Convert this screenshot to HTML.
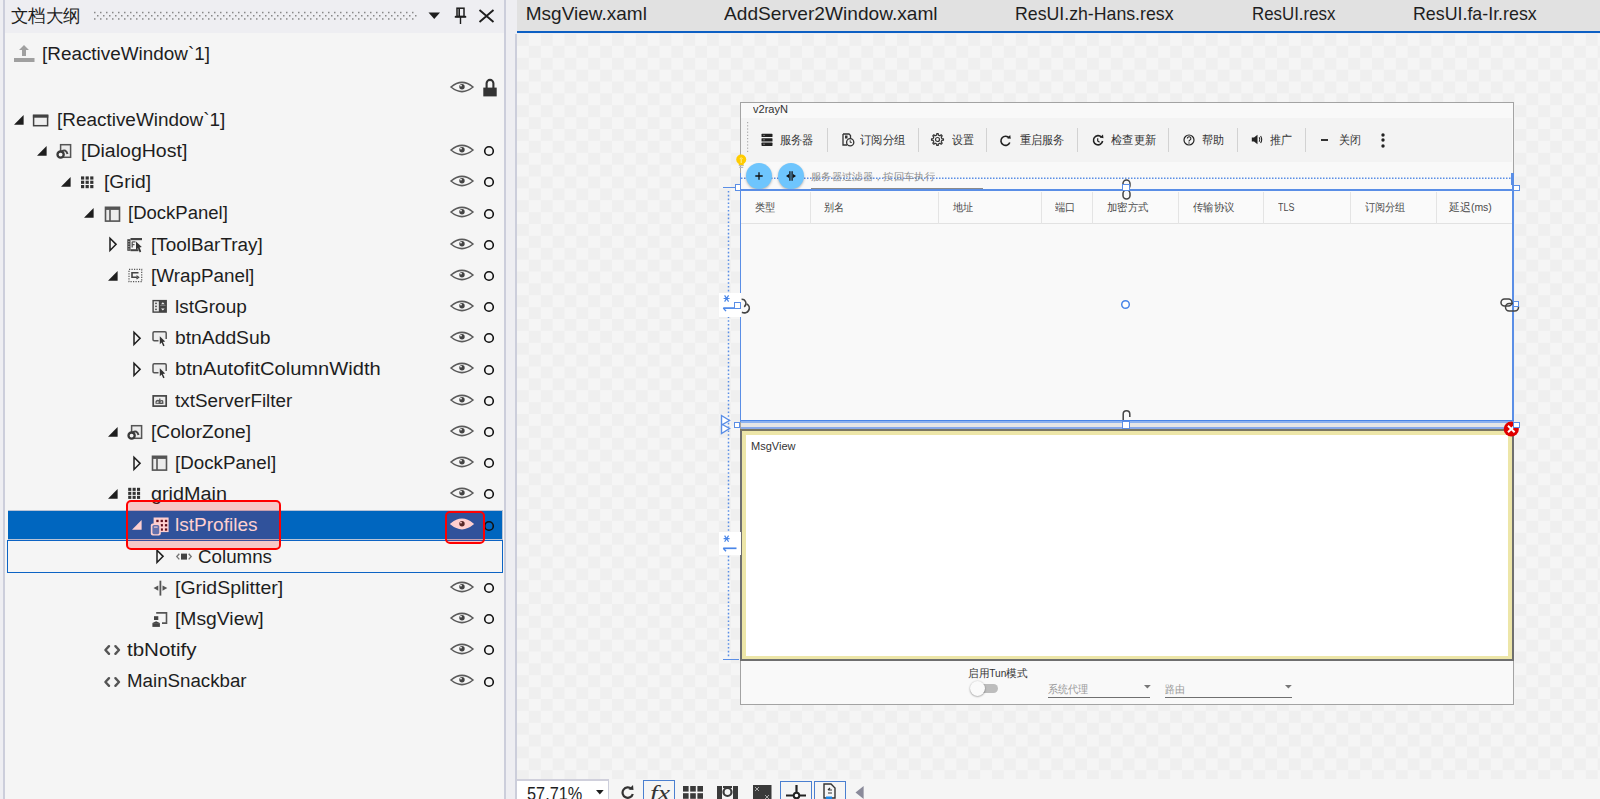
<!DOCTYPE html><html><head><meta charset="utf-8"><style>html,body{margin:0;padding:0}body{width:1600px;height:799px;overflow:hidden;position:relative;background:#eeeef2;font-family:"Liberation Sans",sans-serif}.t{position:absolute;white-space:nowrap;transform-origin:0 0;line-height:1}svg{overflow:visible}</style></head><body><div style="position:absolute;left:0px;top:0px;width:505px;height:799px;background:#f5f5f5;"></div><div style="position:absolute;left:0px;top:0px;width:505px;height:32.5px;background:#eeeef2;"></div><div style="position:absolute;left:0px;top:0px;width:3px;height:799px;background:#eeeef2;"></div><div style="position:absolute;left:3px;top:0px;width:2px;height:799px;background:#cccedb;"></div><div style="position:absolute;left:504px;top:0px;width:2px;height:799px;background:#cccedb;"></div><div style="position:absolute;left:506px;top:0px;width:11px;height:799px;background:#eeeef2;"></div><div style="position:absolute;left:515px;top:34px;width:2px;height:765px;background:#cccedb;"></div><div class="t" id="t0" style="left:11.00px;top:7.26px;font-size:18px;color:#1e1e1e;transform:scaleX(0.9722);">文档大纲</div><svg style="position:absolute;left:0px;top:0px;" width="505" height="32" viewBox="0 0 505 32"><g fill="#888"><rect x="94.0" y="11.8" width="1.5" height="1.5"/><rect x="94.0" y="18.2" width="1.5" height="1.5"/><rect x="97.0" y="15.0" width="1.5" height="1.5"/><rect x="100.0" y="11.8" width="1.5" height="1.5"/><rect x="100.0" y="18.2" width="1.5" height="1.5"/><rect x="103.0" y="15.0" width="1.5" height="1.5"/><rect x="106.0" y="11.8" width="1.5" height="1.5"/><rect x="106.0" y="18.2" width="1.5" height="1.5"/><rect x="109.0" y="15.0" width="1.5" height="1.5"/><rect x="112.0" y="11.8" width="1.5" height="1.5"/><rect x="112.0" y="18.2" width="1.5" height="1.5"/><rect x="115.0" y="15.0" width="1.5" height="1.5"/><rect x="118.0" y="11.8" width="1.5" height="1.5"/><rect x="118.0" y="18.2" width="1.5" height="1.5"/><rect x="121.0" y="15.0" width="1.5" height="1.5"/><rect x="124.0" y="11.8" width="1.5" height="1.5"/><rect x="124.0" y="18.2" width="1.5" height="1.5"/><rect x="127.0" y="15.0" width="1.5" height="1.5"/><rect x="130.0" y="11.8" width="1.5" height="1.5"/><rect x="130.0" y="18.2" width="1.5" height="1.5"/><rect x="133.0" y="15.0" width="1.5" height="1.5"/><rect x="136.0" y="11.8" width="1.5" height="1.5"/><rect x="136.0" y="18.2" width="1.5" height="1.5"/><rect x="139.0" y="15.0" width="1.5" height="1.5"/><rect x="142.0" y="11.8" width="1.5" height="1.5"/><rect x="142.0" y="18.2" width="1.5" height="1.5"/><rect x="145.0" y="15.0" width="1.5" height="1.5"/><rect x="148.0" y="11.8" width="1.5" height="1.5"/><rect x="148.0" y="18.2" width="1.5" height="1.5"/><rect x="151.0" y="15.0" width="1.5" height="1.5"/><rect x="154.0" y="11.8" width="1.5" height="1.5"/><rect x="154.0" y="18.2" width="1.5" height="1.5"/><rect x="157.0" y="15.0" width="1.5" height="1.5"/><rect x="160.0" y="11.8" width="1.5" height="1.5"/><rect x="160.0" y="18.2" width="1.5" height="1.5"/><rect x="163.0" y="15.0" width="1.5" height="1.5"/><rect x="166.0" y="11.8" width="1.5" height="1.5"/><rect x="166.0" y="18.2" width="1.5" height="1.5"/><rect x="169.0" y="15.0" width="1.5" height="1.5"/><rect x="172.0" y="11.8" width="1.5" height="1.5"/><rect x="172.0" y="18.2" width="1.5" height="1.5"/><rect x="175.0" y="15.0" width="1.5" height="1.5"/><rect x="178.0" y="11.8" width="1.5" height="1.5"/><rect x="178.0" y="18.2" width="1.5" height="1.5"/><rect x="181.0" y="15.0" width="1.5" height="1.5"/><rect x="184.0" y="11.8" width="1.5" height="1.5"/><rect x="184.0" y="18.2" width="1.5" height="1.5"/><rect x="187.0" y="15.0" width="1.5" height="1.5"/><rect x="190.0" y="11.8" width="1.5" height="1.5"/><rect x="190.0" y="18.2" width="1.5" height="1.5"/><rect x="193.0" y="15.0" width="1.5" height="1.5"/><rect x="196.0" y="11.8" width="1.5" height="1.5"/><rect x="196.0" y="18.2" width="1.5" height="1.5"/><rect x="199.0" y="15.0" width="1.5" height="1.5"/><rect x="202.0" y="11.8" width="1.5" height="1.5"/><rect x="202.0" y="18.2" width="1.5" height="1.5"/><rect x="205.0" y="15.0" width="1.5" height="1.5"/><rect x="208.0" y="11.8" width="1.5" height="1.5"/><rect x="208.0" y="18.2" width="1.5" height="1.5"/><rect x="211.0" y="15.0" width="1.5" height="1.5"/><rect x="214.0" y="11.8" width="1.5" height="1.5"/><rect x="214.0" y="18.2" width="1.5" height="1.5"/><rect x="217.0" y="15.0" width="1.5" height="1.5"/><rect x="220.0" y="11.8" width="1.5" height="1.5"/><rect x="220.0" y="18.2" width="1.5" height="1.5"/><rect x="223.0" y="15.0" width="1.5" height="1.5"/><rect x="226.0" y="11.8" width="1.5" height="1.5"/><rect x="226.0" y="18.2" width="1.5" height="1.5"/><rect x="229.0" y="15.0" width="1.5" height="1.5"/><rect x="232.0" y="11.8" width="1.5" height="1.5"/><rect x="232.0" y="18.2" width="1.5" height="1.5"/><rect x="235.0" y="15.0" width="1.5" height="1.5"/><rect x="238.0" y="11.8" width="1.5" height="1.5"/><rect x="238.0" y="18.2" width="1.5" height="1.5"/><rect x="241.0" y="15.0" width="1.5" height="1.5"/><rect x="244.0" y="11.8" width="1.5" height="1.5"/><rect x="244.0" y="18.2" width="1.5" height="1.5"/><rect x="247.0" y="15.0" width="1.5" height="1.5"/><rect x="250.0" y="11.8" width="1.5" height="1.5"/><rect x="250.0" y="18.2" width="1.5" height="1.5"/><rect x="253.0" y="15.0" width="1.5" height="1.5"/><rect x="256.0" y="11.8" width="1.5" height="1.5"/><rect x="256.0" y="18.2" width="1.5" height="1.5"/><rect x="259.0" y="15.0" width="1.5" height="1.5"/><rect x="262.0" y="11.8" width="1.5" height="1.5"/><rect x="262.0" y="18.2" width="1.5" height="1.5"/><rect x="265.0" y="15.0" width="1.5" height="1.5"/><rect x="268.0" y="11.8" width="1.5" height="1.5"/><rect x="268.0" y="18.2" width="1.5" height="1.5"/><rect x="271.0" y="15.0" width="1.5" height="1.5"/><rect x="274.0" y="11.8" width="1.5" height="1.5"/><rect x="274.0" y="18.2" width="1.5" height="1.5"/><rect x="277.0" y="15.0" width="1.5" height="1.5"/><rect x="280.0" y="11.8" width="1.5" height="1.5"/><rect x="280.0" y="18.2" width="1.5" height="1.5"/><rect x="283.0" y="15.0" width="1.5" height="1.5"/><rect x="286.0" y="11.8" width="1.5" height="1.5"/><rect x="286.0" y="18.2" width="1.5" height="1.5"/><rect x="289.0" y="15.0" width="1.5" height="1.5"/><rect x="292.0" y="11.8" width="1.5" height="1.5"/><rect x="292.0" y="18.2" width="1.5" height="1.5"/><rect x="295.0" y="15.0" width="1.5" height="1.5"/><rect x="298.0" y="11.8" width="1.5" height="1.5"/><rect x="298.0" y="18.2" width="1.5" height="1.5"/><rect x="301.0" y="15.0" width="1.5" height="1.5"/><rect x="304.0" y="11.8" width="1.5" height="1.5"/><rect x="304.0" y="18.2" width="1.5" height="1.5"/><rect x="307.0" y="15.0" width="1.5" height="1.5"/><rect x="310.0" y="11.8" width="1.5" height="1.5"/><rect x="310.0" y="18.2" width="1.5" height="1.5"/><rect x="313.0" y="15.0" width="1.5" height="1.5"/><rect x="316.0" y="11.8" width="1.5" height="1.5"/><rect x="316.0" y="18.2" width="1.5" height="1.5"/><rect x="319.0" y="15.0" width="1.5" height="1.5"/><rect x="322.0" y="11.8" width="1.5" height="1.5"/><rect x="322.0" y="18.2" width="1.5" height="1.5"/><rect x="325.0" y="15.0" width="1.5" height="1.5"/><rect x="328.0" y="11.8" width="1.5" height="1.5"/><rect x="328.0" y="18.2" width="1.5" height="1.5"/><rect x="331.0" y="15.0" width="1.5" height="1.5"/><rect x="334.0" y="11.8" width="1.5" height="1.5"/><rect x="334.0" y="18.2" width="1.5" height="1.5"/><rect x="337.0" y="15.0" width="1.5" height="1.5"/><rect x="340.0" y="11.8" width="1.5" height="1.5"/><rect x="340.0" y="18.2" width="1.5" height="1.5"/><rect x="343.0" y="15.0" width="1.5" height="1.5"/><rect x="346.0" y="11.8" width="1.5" height="1.5"/><rect x="346.0" y="18.2" width="1.5" height="1.5"/><rect x="349.0" y="15.0" width="1.5" height="1.5"/><rect x="352.0" y="11.8" width="1.5" height="1.5"/><rect x="352.0" y="18.2" width="1.5" height="1.5"/><rect x="355.0" y="15.0" width="1.5" height="1.5"/><rect x="358.0" y="11.8" width="1.5" height="1.5"/><rect x="358.0" y="18.2" width="1.5" height="1.5"/><rect x="361.0" y="15.0" width="1.5" height="1.5"/><rect x="364.0" y="11.8" width="1.5" height="1.5"/><rect x="364.0" y="18.2" width="1.5" height="1.5"/><rect x="367.0" y="15.0" width="1.5" height="1.5"/><rect x="370.0" y="11.8" width="1.5" height="1.5"/><rect x="370.0" y="18.2" width="1.5" height="1.5"/><rect x="373.0" y="15.0" width="1.5" height="1.5"/><rect x="376.0" y="11.8" width="1.5" height="1.5"/><rect x="376.0" y="18.2" width="1.5" height="1.5"/><rect x="379.0" y="15.0" width="1.5" height="1.5"/><rect x="382.0" y="11.8" width="1.5" height="1.5"/><rect x="382.0" y="18.2" width="1.5" height="1.5"/><rect x="385.0" y="15.0" width="1.5" height="1.5"/><rect x="388.0" y="11.8" width="1.5" height="1.5"/><rect x="388.0" y="18.2" width="1.5" height="1.5"/><rect x="391.0" y="15.0" width="1.5" height="1.5"/><rect x="394.0" y="11.8" width="1.5" height="1.5"/><rect x="394.0" y="18.2" width="1.5" height="1.5"/><rect x="397.0" y="15.0" width="1.5" height="1.5"/><rect x="400.0" y="11.8" width="1.5" height="1.5"/><rect x="400.0" y="18.2" width="1.5" height="1.5"/><rect x="403.0" y="15.0" width="1.5" height="1.5"/><rect x="406.0" y="11.8" width="1.5" height="1.5"/><rect x="406.0" y="18.2" width="1.5" height="1.5"/><rect x="409.0" y="15.0" width="1.5" height="1.5"/><rect x="412.0" y="11.8" width="1.5" height="1.5"/><rect x="412.0" y="18.2" width="1.5" height="1.5"/><rect x="415.0" y="15.0" width="1.5" height="1.5"/></g></svg><svg style="position:absolute;left:428px;top:12px;" width="14" height="8" viewBox="0 0 14 8"><path d="M0.5 0.5 L12 0.5 L6.25 7 Z" fill="#1e1e1e"/></svg><svg style="position:absolute;left:454px;top:7px;" width="13" height="18" viewBox="0 0 13 18"><rect x="3" y="1.2" width="7" height="8.3" fill="none" stroke="#1e1e1e" stroke-width="1.5"/><rect x="4.4" y="1.5" width="1.6" height="8" fill="#1e1e1e"/><path d="M0.8 9.8 H12.2" stroke="#1e1e1e" stroke-width="1.9"/><path d="M6.5 10 V17" stroke="#1e1e1e" stroke-width="1.4"/></svg><svg style="position:absolute;left:478px;top:9px;" width="17" height="14" viewBox="0 0 17 14"><path d="M1.5 1 L15.5 13 M15.5 1 L1.5 13" stroke="#1e1e1e" stroke-width="1.9"/></svg><svg style="position:absolute;left:13px;top:44px;" width="23" height="19" viewBox="0 0 23 19"><path d="M11 1 L16 6 H13 V12 H9 V6 H6 Z" fill="#a0a0a0"/><rect x="1" y="14" width="20.5" height="4" fill="#a0a0a0"/></svg><div class="t" id="t1" style="left:42.00px;top:44.96px;font-size:18px;color:#1e1e1e;transform:scaleX(1.0496);">[ReactiveWindow`1]</div><svg style="position:absolute;left:450.4px;top:79.7px;" width="24" height="14" viewBox="0 0 24 14"><path d="M1 7 Q12 -2.2 23 7 Q12 16.2 1 7 Z" fill="none" stroke="#5a5a5a" stroke-width="1.5"/><circle cx="12" cy="6.8" r="2.7" fill="#444"/><circle cx="11" cy="5.6" r="0.9" fill="#f5f5f5"/></svg><svg style="position:absolute;left:482px;top:78px;" width="16" height="19" viewBox="0 0 16 19"><path d="M4.6 10 V5.3 A3.4 3.4 0 0 1 11.4 5.3 V10" fill="none" stroke="#333" stroke-width="2.1"/><rect x="1.3" y="9.6" width="13.4" height="8.8" fill="#333"/></svg><div style="position:absolute;left:7.5px;top:510px;width:495px;height:29.5px;background:#b9c3d6;"></div><div style="position:absolute;left:8px;top:511px;width:494px;height:27.5px;background:#0066bf;"></div><div style="position:absolute;left:7px;top:540px;width:493.5px;height:30.5px;border:1.2px solid #0c63c4;box-sizing:content-box"></div><svg style="position:absolute;left:13.5px;top:114.80000000000001px;" width="10" height="10" viewBox="0 0 10 10"><path d="M9.6 0 L9.6 9.8 L0 9.8 Z" fill="#1e1e1e"/></svg><svg style="position:absolute;left:32.7px;top:111.9px;" width="20" height="18" viewBox="0 0 20 18"><rect x="0.6" y="3.4" width="14" height="10.3" fill="#efefef" stroke="#424242" stroke-width="1.5"/><rect x="-0.1" y="2.7" width="15.4" height="3" fill="#424242"/></svg><div class="t" id="t2" style="left:57.00px;top:110.76px;font-size:18px;color:#1e1e1e;transform:scaleX(1.0515);">[ReactiveWindow`1]</div><svg style="position:absolute;left:37.1px;top:146.0px;" width="10" height="10" viewBox="0 0 10 10"><path d="M9.6 0 L9.6 9.8 L0 9.8 Z" fill="#1e1e1e"/></svg><svg style="position:absolute;left:56.300000000000004px;top:143.1px;" width="20" height="18" viewBox="0 0 20 18"><rect x="4.6" y="1.7" width="10" height="12.6" fill="#ececec" stroke="#555" stroke-width="1.5"/><path d="M5.5 8.5 Q10 5.5 11.5 11" fill="none" stroke="#444" stroke-width="2"/><circle cx="4.6" cy="11.6" r="3.1" fill="#f5f5f5" stroke="#3a3a3a" stroke-width="2.3"/></svg><div class="t" id="t3" style="left:80.60px;top:141.96px;font-size:18px;color:#1e1e1e;transform:scaleX(1.0842);">[DialogHost]</div><svg style="position:absolute;left:450.4px;top:143.0px;" width="24" height="14" viewBox="0 0 24 14"><path d="M1 7 Q12 -2.2 23 7 Q12 16.2 1 7 Z" fill="none" stroke="#5a5a5a" stroke-width="1.5"/><circle cx="12" cy="6.8" r="2.7" fill="#444"/><circle cx="11" cy="5.6" r="0.9" fill="#f5f5f5"/></svg><svg style="position:absolute;left:483px;top:145.2px;" width="12" height="12" viewBox="0 0 12 12"><circle cx="6" cy="6" r="4.3" fill="none" stroke="#111" stroke-width="1.6"/></svg><svg style="position:absolute;left:60.7px;top:177.20000000000002px;" width="10" height="10" viewBox="0 0 10 10"><path d="M9.6 0 L9.6 9.8 L0 9.8 Z" fill="#1e1e1e"/></svg><svg style="position:absolute;left:79.9px;top:174.3px;" width="20" height="18" viewBox="0 0 20 18"><rect x="1.0" y="2.4" width="3.2" height="3.2" fill="#333"/><rect x="5.6" y="2.4" width="3.2" height="3.2" fill="#333"/><rect x="10.2" y="2.4" width="3.2" height="3.2" fill="#333"/><rect x="1.0" y="6.7" width="3.2" height="3.2" fill="#333"/><rect x="5.6" y="6.7" width="3.2" height="3.2" fill="#333"/><rect x="10.2" y="6.7" width="3.2" height="3.2" fill="#333"/><rect x="1.0" y="11.0" width="3.2" height="3.2" fill="#333"/><rect x="5.6" y="11.0" width="3.2" height="3.2" fill="#333"/><rect x="10.2" y="11.0" width="3.2" height="3.2" fill="#333"/></svg><div class="t" id="t4" style="left:104.20px;top:173.16px;font-size:18px;color:#1e1e1e;transform:scaleX(1.0678);">[Grid]</div><svg style="position:absolute;left:450.4px;top:174.20000000000002px;" width="24" height="14" viewBox="0 0 24 14"><path d="M1 7 Q12 -2.2 23 7 Q12 16.2 1 7 Z" fill="none" stroke="#5a5a5a" stroke-width="1.5"/><circle cx="12" cy="6.8" r="2.7" fill="#444"/><circle cx="11" cy="5.6" r="0.9" fill="#f5f5f5"/></svg><svg style="position:absolute;left:483px;top:176.4px;" width="12" height="12" viewBox="0 0 12 12"><circle cx="6" cy="6" r="4.3" fill="none" stroke="#111" stroke-width="1.6"/></svg><svg style="position:absolute;left:84.30000000000001px;top:208.4px;" width="10" height="10" viewBox="0 0 10 10"><path d="M9.6 0 L9.6 9.8 L0 9.8 Z" fill="#1e1e1e"/></svg><svg style="position:absolute;left:103.50000000000001px;top:205.5px;" width="20" height="18" viewBox="0 0 20 18"><rect x="1.5" y="1.3" width="14" height="13.8" fill="#ececec" stroke="#555" stroke-width="1.6"/><rect x="1.5" y="1.3" width="14" height="2.6" fill="#555"/><path d="M6 3.5 V15" stroke="#555" stroke-width="1.6"/></svg><div class="t" id="t5" style="left:127.80px;top:204.36px;font-size:18px;color:#1e1e1e;transform:scaleX(1.0282);">[DockPanel]</div><svg style="position:absolute;left:450.4px;top:205.4px;" width="24" height="14" viewBox="0 0 24 14"><path d="M1 7 Q12 -2.2 23 7 Q12 16.2 1 7 Z" fill="none" stroke="#5a5a5a" stroke-width="1.5"/><circle cx="12" cy="6.8" r="2.7" fill="#444"/><circle cx="11" cy="5.6" r="0.9" fill="#f5f5f5"/></svg><svg style="position:absolute;left:483px;top:207.6px;" width="12" height="12" viewBox="0 0 12 12"><circle cx="6" cy="6" r="4.3" fill="none" stroke="#111" stroke-width="1.6"/></svg><svg style="position:absolute;left:109.0px;top:237.2px;" width="9" height="15" viewBox="0 0 9 15"><path d="M1 1.2 L7.1 7.35 L1 13.5 Z" fill="none" stroke="#1e1e1e" stroke-width="1.5" stroke-linejoin="miter"/></svg><svg style="position:absolute;left:127.10000000000001px;top:236.7px;" width="20" height="18" viewBox="0 0 20 18"><rect x="3.5" y="1" width="11.5" height="2.2" fill="#444"/><rect x="0.3" y="2.2" width="3.2" height="11.6" fill="#444"/><path d="M1.2 4.5 H2.6 M1.2 7 H2.6 M1.2 9.5 H2.6 M1.2 12 H2.6" stroke="#bbb" stroke-width="0.9"/><rect x="3.5" y="12.2" width="8" height="2" fill="#444"/><path d="M5.2 4.8 V10.5 M5.2 4.8 H8.5 M5.2 7.7 H7.5" stroke="#555" stroke-width="1.3" fill="none"/><path d="M9 4.5 L14.8 10 L12.6 10.4 L14.2 14.6 L12.7 15.4 L11 11.3 L9 13 Z" fill="#333"/></svg><div class="t" id="t6" style="left:151.40px;top:235.56px;font-size:18px;color:#1e1e1e;transform:scaleX(1.0510);">[ToolBarTray]</div><svg style="position:absolute;left:450.4px;top:236.6px;" width="24" height="14" viewBox="0 0 24 14"><path d="M1 7 Q12 -2.2 23 7 Q12 16.2 1 7 Z" fill="none" stroke="#5a5a5a" stroke-width="1.5"/><circle cx="12" cy="6.8" r="2.7" fill="#444"/><circle cx="11" cy="5.6" r="0.9" fill="#f5f5f5"/></svg><svg style="position:absolute;left:483px;top:238.79999999999998px;" width="12" height="12" viewBox="0 0 12 12"><circle cx="6" cy="6" r="4.3" fill="none" stroke="#111" stroke-width="1.6"/></svg><svg style="position:absolute;left:107.9px;top:270.79999999999995px;" width="10" height="10" viewBox="0 0 10 10"><path d="M9.6 0 L9.6 9.8 L0 9.8 Z" fill="#1e1e1e"/></svg><svg style="position:absolute;left:127.10000000000001px;top:267.9px;" width="20" height="18" viewBox="0 0 20 18"><rect x="2" y="1.4" width="12.7" height="12.3" fill="none" stroke="#555" stroke-width="1.2" stroke-dasharray="1.2 1.3"/><path d="M11.5 4.8 H5 V9.3 H10.5" stroke="#444" stroke-width="1.6" fill="none"/><path d="M9.5 7.6 L11.8 9.3 L9.5 11" fill="none" stroke="#444" stroke-width="1.1"/></svg><div class="t" id="t7" style="left:151.40px;top:266.76px;font-size:18px;color:#1e1e1e;transform:scaleX(1.0464);">[WrapPanel]</div><svg style="position:absolute;left:450.4px;top:267.79999999999995px;" width="24" height="14" viewBox="0 0 24 14"><path d="M1 7 Q12 -2.2 23 7 Q12 16.2 1 7 Z" fill="none" stroke="#5a5a5a" stroke-width="1.5"/><circle cx="12" cy="6.8" r="2.7" fill="#444"/><circle cx="11" cy="5.6" r="0.9" fill="#f5f5f5"/></svg><svg style="position:absolute;left:483px;top:270.0px;" width="12" height="12" viewBox="0 0 12 12"><circle cx="6" cy="6" r="4.3" fill="none" stroke="#111" stroke-width="1.6"/></svg><svg style="position:absolute;left:150.7px;top:299.1px;" width="20" height="18" viewBox="0 0 20 18"><rect x="2.1" y="1.6" width="13.1" height="11.5" fill="#e8e8e8" stroke="#444" stroke-width="1.4"/><path d="M8.5 1.6 V13.1 M8.5 7.3 H15.2" stroke="#444" stroke-width="1.3"/><rect x="8.5" y="1.6" width="6.7" height="5" fill="#444"/><rect x="8.5" y="8" width="6.7" height="5" fill="#444"/><path d="M10 5.3 L11.85 3.2 L13.7 5.3 Z M10 9.5 L11.85 11.6 L13.7 9.5 Z" fill="#eee"/><circle cx="5" cy="4.3" r="0.9" fill="#444"/><circle cx="5" cy="7.3" r="0.9" fill="#444"/><circle cx="5" cy="10.3" r="0.9" fill="#444"/></svg><div class="t" id="t8" style="left:175.00px;top:297.96px;font-size:18px;color:#1e1e1e;transform:scaleX(1.0554);">lstGroup</div><svg style="position:absolute;left:450.4px;top:299.0px;" width="24" height="14" viewBox="0 0 24 14"><path d="M1 7 Q12 -2.2 23 7 Q12 16.2 1 7 Z" fill="none" stroke="#5a5a5a" stroke-width="1.5"/><circle cx="12" cy="6.8" r="2.7" fill="#444"/><circle cx="11" cy="5.6" r="0.9" fill="#f5f5f5"/></svg><svg style="position:absolute;left:483px;top:301.20000000000005px;" width="12" height="12" viewBox="0 0 12 12"><circle cx="6" cy="6" r="4.3" fill="none" stroke="#111" stroke-width="1.6"/></svg><svg style="position:absolute;left:132.6px;top:330.8px;" width="9" height="15" viewBox="0 0 9 15"><path d="M1 1.2 L7.1 7.35 L1 13.5 Z" fill="none" stroke="#1e1e1e" stroke-width="1.5" stroke-linejoin="miter"/></svg><svg style="position:absolute;left:150.7px;top:330.3px;" width="20" height="18" viewBox="0 0 20 18"><path d="M7.5 10.8 H3.2 Q2 10.8 2 9.6 V3 Q2 1.8 3.2 1.8 H14 Q15.2 1.8 15.2 3 V9 " fill="#ededed" stroke="#555" stroke-width="1.5"/><path d="M8.8 6.3 L14.2 11.6 L11.9 11.9 L13.6 15.6 L12.2 16.3 L10.6 12.6 L8.8 14.2 Z" fill="#333"/></svg><div class="t" id="t9" style="left:175.00px;top:329.16px;font-size:18px;color:#1e1e1e;transform:scaleX(1.0710);">btnAddSub</div><svg style="position:absolute;left:450.4px;top:330.2px;" width="24" height="14" viewBox="0 0 24 14"><path d="M1 7 Q12 -2.2 23 7 Q12 16.2 1 7 Z" fill="none" stroke="#5a5a5a" stroke-width="1.5"/><circle cx="12" cy="6.8" r="2.7" fill="#444"/><circle cx="11" cy="5.6" r="0.9" fill="#f5f5f5"/></svg><svg style="position:absolute;left:483px;top:332.40000000000003px;" width="12" height="12" viewBox="0 0 12 12"><circle cx="6" cy="6" r="4.3" fill="none" stroke="#111" stroke-width="1.6"/></svg><svg style="position:absolute;left:132.6px;top:362.0px;" width="9" height="15" viewBox="0 0 9 15"><path d="M1 1.2 L7.1 7.35 L1 13.5 Z" fill="none" stroke="#1e1e1e" stroke-width="1.5" stroke-linejoin="miter"/></svg><svg style="position:absolute;left:150.7px;top:361.5px;" width="20" height="18" viewBox="0 0 20 18"><path d="M7.5 10.8 H3.2 Q2 10.8 2 9.6 V3 Q2 1.8 3.2 1.8 H14 Q15.2 1.8 15.2 3 V9 " fill="#ededed" stroke="#555" stroke-width="1.5"/><path d="M8.8 6.3 L14.2 11.6 L11.9 11.9 L13.6 15.6 L12.2 16.3 L10.6 12.6 L8.8 14.2 Z" fill="#333"/></svg><div class="t" id="t10" style="left:175.00px;top:360.36px;font-size:18px;color:#1e1e1e;transform:scaleX(1.1174);">btnAutofitColumnWidth</div><svg style="position:absolute;left:450.4px;top:361.4px;" width="24" height="14" viewBox="0 0 24 14"><path d="M1 7 Q12 -2.2 23 7 Q12 16.2 1 7 Z" fill="none" stroke="#5a5a5a" stroke-width="1.5"/><circle cx="12" cy="6.8" r="2.7" fill="#444"/><circle cx="11" cy="5.6" r="0.9" fill="#f5f5f5"/></svg><svg style="position:absolute;left:483px;top:363.6px;" width="12" height="12" viewBox="0 0 12 12"><circle cx="6" cy="6" r="4.3" fill="none" stroke="#111" stroke-width="1.6"/></svg><svg style="position:absolute;left:150.7px;top:392.70000000000005px;" width="20" height="18" viewBox="0 0 20 18"><rect x="2.2" y="2.9" width="13" height="10.2" fill="#ededed" stroke="#444" stroke-width="1.7"/><path d="M5 9.8 Q5 7.5 7 7.5 Q8.2 7.5 8.2 8.6 V10.5 M8.8 5.5 V10.5 M8.8 8.5 Q11.8 6.5 11.8 9 Q11.8 10.8 8.8 10.3" fill="none" stroke="#555" stroke-width="1.3"/><path d="M4.5 10.3 H12.5" stroke="#555" stroke-width="1"/></svg><div class="t" id="t11" style="left:175.00px;top:391.56px;font-size:18px;color:#1e1e1e;transform:scaleX(1.0470);">txtServerFilter</div><svg style="position:absolute;left:450.4px;top:392.6px;" width="24" height="14" viewBox="0 0 24 14"><path d="M1 7 Q12 -2.2 23 7 Q12 16.2 1 7 Z" fill="none" stroke="#5a5a5a" stroke-width="1.5"/><circle cx="12" cy="6.8" r="2.7" fill="#444"/><circle cx="11" cy="5.6" r="0.9" fill="#f5f5f5"/></svg><svg style="position:absolute;left:483px;top:394.80000000000007px;" width="12" height="12" viewBox="0 0 12 12"><circle cx="6" cy="6" r="4.3" fill="none" stroke="#111" stroke-width="1.6"/></svg><svg style="position:absolute;left:107.9px;top:426.79999999999995px;" width="10" height="10" viewBox="0 0 10 10"><path d="M9.6 0 L9.6 9.8 L0 9.8 Z" fill="#1e1e1e"/></svg><svg style="position:absolute;left:127.10000000000001px;top:423.9px;" width="20" height="18" viewBox="0 0 20 18"><rect x="4.6" y="1.7" width="10" height="12.6" fill="#ececec" stroke="#555" stroke-width="1.5"/><path d="M5.5 8.5 Q10 5.5 11.5 11" fill="none" stroke="#444" stroke-width="2"/><circle cx="4.6" cy="11.6" r="3.1" fill="#f5f5f5" stroke="#3a3a3a" stroke-width="2.3"/></svg><div class="t" id="t12" style="left:151.40px;top:422.76px;font-size:18px;color:#1e1e1e;transform:scaleX(1.0633);">[ColorZone]</div><svg style="position:absolute;left:450.4px;top:423.79999999999995px;" width="24" height="14" viewBox="0 0 24 14"><path d="M1 7 Q12 -2.2 23 7 Q12 16.2 1 7 Z" fill="none" stroke="#5a5a5a" stroke-width="1.5"/><circle cx="12" cy="6.8" r="2.7" fill="#444"/><circle cx="11" cy="5.6" r="0.9" fill="#f5f5f5"/></svg><svg style="position:absolute;left:483px;top:426.0px;" width="12" height="12" viewBox="0 0 12 12"><circle cx="6" cy="6" r="4.3" fill="none" stroke="#111" stroke-width="1.6"/></svg><svg style="position:absolute;left:132.6px;top:455.6px;" width="9" height="15" viewBox="0 0 9 15"><path d="M1 1.2 L7.1 7.35 L1 13.5 Z" fill="none" stroke="#1e1e1e" stroke-width="1.5" stroke-linejoin="miter"/></svg><svg style="position:absolute;left:150.7px;top:455.1px;" width="20" height="18" viewBox="0 0 20 18"><rect x="1.5" y="1.3" width="14" height="13.8" fill="#ececec" stroke="#555" stroke-width="1.6"/><rect x="1.5" y="1.3" width="14" height="2.6" fill="#555"/><path d="M6 3.5 V15" stroke="#555" stroke-width="1.6"/></svg><div class="t" id="t13" style="left:175.00px;top:453.96px;font-size:18px;color:#1e1e1e;transform:scaleX(1.0416);">[DockPanel]</div><svg style="position:absolute;left:450.4px;top:455.0px;" width="24" height="14" viewBox="0 0 24 14"><path d="M1 7 Q12 -2.2 23 7 Q12 16.2 1 7 Z" fill="none" stroke="#5a5a5a" stroke-width="1.5"/><circle cx="12" cy="6.8" r="2.7" fill="#444"/><circle cx="11" cy="5.6" r="0.9" fill="#f5f5f5"/></svg><svg style="position:absolute;left:483px;top:457.20000000000005px;" width="12" height="12" viewBox="0 0 12 12"><circle cx="6" cy="6" r="4.3" fill="none" stroke="#111" stroke-width="1.6"/></svg><svg style="position:absolute;left:107.9px;top:489.19999999999993px;" width="10" height="10" viewBox="0 0 10 10"><path d="M9.6 0 L9.6 9.8 L0 9.8 Z" fill="#1e1e1e"/></svg><svg style="position:absolute;left:127.10000000000001px;top:486.29999999999995px;" width="20" height="18" viewBox="0 0 20 18"><rect x="1.2" y="1.8" width="3.1" height="3.1" fill="#333"/><rect x="5.6" y="1.8" width="3.1" height="3.1" fill="#333"/><rect x="10.0" y="1.8" width="3.1" height="3.1" fill="#333"/><rect x="1.2" y="5.8" width="3.1" height="3.1" fill="#333"/><rect x="5.6" y="5.8" width="3.1" height="3.1" fill="#333"/><rect x="10.0" y="5.8" width="3.1" height="3.1" fill="#333"/><rect x="1.2" y="9.8" width="3.1" height="3.1" fill="#333"/><rect x="5.6" y="9.8" width="3.1" height="3.1" fill="#333"/><rect x="10.0" y="9.8" width="3.1" height="3.1" fill="#333"/></svg><div class="t" id="t14" style="left:151.40px;top:485.16px;font-size:18px;color:#1e1e1e;transform:scaleX(1.1010);">gridMain</div><svg style="position:absolute;left:450.4px;top:486.19999999999993px;" width="24" height="14" viewBox="0 0 24 14"><path d="M1 7 Q12 -2.2 23 7 Q12 16.2 1 7 Z" fill="none" stroke="#5a5a5a" stroke-width="1.5"/><circle cx="12" cy="6.8" r="2.7" fill="#444"/><circle cx="11" cy="5.6" r="0.9" fill="#f5f5f5"/></svg><svg style="position:absolute;left:483px;top:488.4px;" width="12" height="12" viewBox="0 0 12 12"><circle cx="6" cy="6" r="4.3" fill="none" stroke="#111" stroke-width="1.6"/></svg><svg style="position:absolute;left:131.5px;top:520.4px;" width="10" height="10" viewBox="0 0 10 10"><path d="M9.6 0 L9.6 9.8 L0 9.8 Z" fill="#ffffff"/></svg><svg style="position:absolute;left:150.7px;top:517.5px;" width="20" height="18" viewBox="0 0 20 18"><rect x="2.6" y="-0.5" width="15" height="14.6" fill="#ffffff"/><rect x="5.3" y="1.8" width="2.3" height="2.3" fill="#3a1020"/><rect x="9.6" y="1.8" width="2.3" height="2.3" fill="#3a1020"/><rect x="13.9" y="1.8" width="2.3" height="2.3" fill="#3a1020"/><rect x="5.3" y="6.1" width="2.3" height="2.3" fill="#3a1020"/><rect x="9.6" y="6.1" width="2.3" height="2.3" fill="#3a1020"/><rect x="13.9" y="6.1" width="2.3" height="2.3" fill="#3a1020"/><rect x="5.3" y="10.4" width="2.3" height="2.3" fill="#3a1020"/><rect x="9.6" y="10.4" width="2.3" height="2.3" fill="#3a1020"/><rect x="13.9" y="10.4" width="2.3" height="2.3" fill="#3a1020"/><rect x="-0.2" y="5.5" width="10" height="12" rx="2" fill="#ffffff"/><rect x="1.4" y="7" width="6.8" height="9.2" rx="1.6" fill="#3f8ad6"/><rect x="2.8" y="8.5" width="4" height="1.2" rx="0.6" fill="#e8f2ff"/></svg><div class="t" id="t15" style="left:175.00px;top:516.36px;font-size:18px;color:#ffffff;transform:scaleX(1.0586);">lstProfiles</div><svg style="position:absolute;left:450.4px;top:517.4px;" width="24" height="14" viewBox="0 0 24 14"><path d="M1 7 Q12 -2.2 23 7 Q12 16.2 1 7 Z" fill="#ffffff" stroke="#ffffff" stroke-width="1.5"/><circle cx="12" cy="6.8" r="2.7" fill="#333"/><circle cx="11" cy="5.6" r="0.9" fill="#ffffff"/></svg><svg style="position:absolute;left:483px;top:519.6px;" width="12" height="12" viewBox="0 0 12 12"><circle cx="6" cy="6" r="4.3" fill="none" stroke="#111" stroke-width="1.6"/></svg><svg style="position:absolute;left:156.2px;top:549.2px;" width="9" height="15" viewBox="0 0 9 15"><path d="M1 1.2 L7.1 7.35 L1 13.5 Z" fill="none" stroke="#1e1e1e" stroke-width="1.5" stroke-linejoin="miter"/></svg><svg style="position:absolute;left:175.5px;top:552.9000000000001px;" width="17" height="9" viewBox="0 0 17 9"><path d="M3.3 0.8 L0.8 3.6 L3.3 6.4" fill="none" stroke="#777" stroke-width="1.4"/><rect x="5" y="0.6" width="6" height="6" fill="#444"/><path d="M12.7 0.8 L15.2 3.6 L12.7 6.4" fill="none" stroke="#777" stroke-width="1.4"/></svg><div class="t" id="t16" style="left:198.00px;top:547.56px;font-size:18px;color:#1e1e1e;transform:scaleX(1.0418);">Columns</div><svg style="position:absolute;left:150.7px;top:579.9px;" width="20" height="18" viewBox="0 0 20 18"><path d="M9.4 0.7 V15.6" stroke="#555" stroke-width="1.8"/><path d="M2.5 8.1 L7.3 5.4 V10.8 Z M16.3 8.1 L11.5 5.4 V10.8 Z" fill="#555"/></svg><div class="t" id="t17" style="left:175.00px;top:578.76px;font-size:18px;color:#1e1e1e;transform:scaleX(1.0807);">[GridSplitter]</div><svg style="position:absolute;left:450.4px;top:579.8px;" width="24" height="14" viewBox="0 0 24 14"><path d="M1 7 Q12 -2.2 23 7 Q12 16.2 1 7 Z" fill="none" stroke="#5a5a5a" stroke-width="1.5"/><circle cx="12" cy="6.8" r="2.7" fill="#444"/><circle cx="11" cy="5.6" r="0.9" fill="#f5f5f5"/></svg><svg style="position:absolute;left:483px;top:582.0px;" width="12" height="12" viewBox="0 0 12 12"><circle cx="6" cy="6" r="4.3" fill="none" stroke="#111" stroke-width="1.6"/></svg><svg style="position:absolute;left:150.7px;top:611.1px;" width="20" height="18" viewBox="0 0 20 18"><path d="M5.2 1.9 H15.5 V12.1 H11" fill="none" stroke="#555" stroke-width="1.6"/><rect x="3" y="5.2" width="4.3" height="3.8" fill="#444"/><rect x="1.4" y="12.1" width="7.5" height="3.8" fill="#444"/><path d="M1.4 12.1 L5.1 10.3 L8.9 12.1" fill="#444"/></svg><div class="t" id="t18" style="left:175.00px;top:609.96px;font-size:18px;color:#1e1e1e;transform:scaleX(1.0725);">[MsgView]</div><svg style="position:absolute;left:450.4px;top:611.0px;" width="24" height="14" viewBox="0 0 24 14"><path d="M1 7 Q12 -2.2 23 7 Q12 16.2 1 7 Z" fill="none" stroke="#5a5a5a" stroke-width="1.5"/><circle cx="12" cy="6.8" r="2.7" fill="#444"/><circle cx="11" cy="5.6" r="0.9" fill="#f5f5f5"/></svg><svg style="position:absolute;left:483px;top:613.2px;" width="12" height="12" viewBox="0 0 12 12"><circle cx="6" cy="6" r="4.3" fill="none" stroke="#111" stroke-width="1.6"/></svg><svg style="position:absolute;left:104px;top:645.3px;" width="17" height="11" viewBox="0 0 17 11"><path d="M5 1.2 L1.4 5 L5 8.8 M11.4 1.2 L15 5 L11.4 8.8" fill="none" stroke="#555" stroke-width="2.4" stroke-linejoin="round" stroke-linecap="round"/></svg><div class="t" id="t19" style="left:127.40px;top:641.16px;font-size:18px;color:#1e1e1e;transform:scaleX(1.1404);">tbNotify</div><svg style="position:absolute;left:450.4px;top:642.1999999999999px;" width="24" height="14" viewBox="0 0 24 14"><path d="M1 7 Q12 -2.2 23 7 Q12 16.2 1 7 Z" fill="none" stroke="#5a5a5a" stroke-width="1.5"/><circle cx="12" cy="6.8" r="2.7" fill="#444"/><circle cx="11" cy="5.6" r="0.9" fill="#f5f5f5"/></svg><svg style="position:absolute;left:483px;top:644.4px;" width="12" height="12" viewBox="0 0 12 12"><circle cx="6" cy="6" r="4.3" fill="none" stroke="#111" stroke-width="1.6"/></svg><svg style="position:absolute;left:104px;top:676.5px;" width="17" height="11" viewBox="0 0 17 11"><path d="M5 1.2 L1.4 5 L5 8.8 M11.4 1.2 L15 5 L11.4 8.8" fill="none" stroke="#555" stroke-width="2.4" stroke-linejoin="round" stroke-linecap="round"/></svg><div class="t" id="t20" style="left:127.40px;top:672.36px;font-size:18px;color:#1e1e1e;transform:scaleX(1.0394);">MainSnackbar</div><svg style="position:absolute;left:450.4px;top:673.4px;" width="24" height="14" viewBox="0 0 24 14"><path d="M1 7 Q12 -2.2 23 7 Q12 16.2 1 7 Z" fill="none" stroke="#5a5a5a" stroke-width="1.5"/><circle cx="12" cy="6.8" r="2.7" fill="#444"/><circle cx="11" cy="5.6" r="0.9" fill="#f5f5f5"/></svg><svg style="position:absolute;left:483px;top:675.6px;" width="12" height="12" viewBox="0 0 12 12"><circle cx="6" cy="6" r="4.3" fill="none" stroke="#111" stroke-width="1.6"/></svg><div style="position:absolute;left:125.5px;top:500px;width:155px;height:49.5px;box-sizing:border-box;border:2.6px solid #ff0000;border-radius:5px;background:rgba(255,0,0,0.19)"></div><div style="position:absolute;left:445px;top:510.5px;width:40px;height:33px;box-sizing:border-box;border:2.8px solid #ff0000;border-radius:5px;background:rgba(255,0,0,0.19)"></div><div style="position:absolute;left:517px;top:0px;width:1083px;height:31px;background:#e1e1e1;"></div><div style="position:absolute;left:517px;top:30.9px;width:1083px;height:2.5px;background:#0c5fc3;"></div><div class="t" id="t21" style="left:525.80px;top:3.52px;font-size:19px;color:#1e1e1e;">MsgView.xaml</div><div class="t" id="t22" style="left:724.40px;top:3.52px;font-size:19px;color:#1e1e1e;transform:scaleX(1.0063);">AddServer2Window.xaml</div><div class="t" id="t23" style="left:1015.40px;top:3.52px;font-size:19px;color:#1e1e1e;transform:scaleX(0.9324);">ResUI.zh-Hans.resx</div><div class="t" id="t24" style="left:1251.90px;top:3.52px;font-size:19px;color:#1e1e1e;transform:scaleX(0.8875);">ResUI.resx</div><div class="t" id="t25" style="left:1412.70px;top:3.52px;font-size:19px;color:#1e1e1e;transform:scaleX(0.9372);">ResUI.fa-Ir.resx</div><div style="position:absolute;left:517px;top:33.6px;width:1083px;height:745.1px;background-color:#f5f5f5;background-image:conic-gradient(transparent 25%, #efefef 0 50%, transparent 0 75%, #efefef 0);background-size:23.75px 23.75px;background-position:0 0"></div><div style="position:absolute;left:740px;top:102.3px;width:773.5px;height:602.5px;background:#f9f9f9;box-sizing:border-box;border:1.2px solid #a3a3a3"></div><div style="position:absolute;left:741.2px;top:117.5px;width:771.2px;height:44px;background:#f3f3f3;"></div><div class="t" id="t26" style="left:753.30px;top:104.49px;font-size:11px;color:#333;transform:scaleX(1.0045);">v2rayN</div><svg style="position:absolute;left:745.5px;top:121px;" width="4" height="34" viewBox="0 0 4 34"><rect x="1" y="1.0" width="1.2" height="1.2" fill="#aaa"/><rect x="1" y="4.2" width="1.2" height="1.2" fill="#aaa"/><rect x="1" y="7.4" width="1.2" height="1.2" fill="#aaa"/><rect x="1" y="10.6" width="1.2" height="1.2" fill="#aaa"/><rect x="1" y="13.8" width="1.2" height="1.2" fill="#aaa"/><rect x="1" y="17.0" width="1.2" height="1.2" fill="#aaa"/><rect x="1" y="20.2" width="1.2" height="1.2" fill="#aaa"/><rect x="1" y="23.4" width="1.2" height="1.2" fill="#aaa"/><rect x="1" y="26.6" width="1.2" height="1.2" fill="#aaa"/><rect x="1" y="29.8" width="1.2" height="1.2" fill="#aaa"/></svg><div style="position:absolute;left:826.9px;top:128px;width:1px;height:23.5px;background:#d2d2d2;"></div><div style="position:absolute;left:918.0px;top:128px;width:1px;height:23.5px;background:#d2d2d2;"></div><div style="position:absolute;left:985.8px;top:128px;width:1px;height:23.5px;background:#d2d2d2;"></div><div style="position:absolute;left:1076.8px;top:128px;width:1px;height:23.5px;background:#d2d2d2;"></div><div style="position:absolute;left:1168.1px;top:128px;width:1px;height:23.5px;background:#d2d2d2;"></div><div style="position:absolute;left:1236.9px;top:128px;width:1px;height:23.5px;background:#d2d2d2;"></div><div style="position:absolute;left:1305.1px;top:128px;width:1px;height:23.5px;background:#d2d2d2;"></div><div class="t" id="t27" style="left:780.40px;top:135.27px;font-size:11.5px;color:#333;transform:scaleX(0.9361);">服务器</div><div class="t" id="t28" style="left:860.30px;top:135.27px;font-size:11.5px;color:#333;transform:scaleX(0.9479);">订阅分组</div><div class="t" id="t29" style="left:952.00px;top:135.27px;font-size:11.5px;color:#333;transform:scaleX(0.9167);">设置</div><div class="t" id="t30" style="left:1020.40px;top:135.27px;font-size:11.5px;color:#333;transform:scaleX(0.9292);">重启服务</div><div class="t" id="t31" style="left:1111.00px;top:135.27px;font-size:11.5px;color:#333;transform:scaleX(0.9375);">检查更新</div><div class="t" id="t32" style="left:1202.40px;top:135.27px;font-size:11.5px;color:#333;transform:scaleX(0.9167);">帮助</div><div class="t" id="t33" style="left:1270.40px;top:135.27px;font-size:11.5px;color:#333;transform:scaleX(0.9167);">推广</div><div class="t" id="t34" style="left:1339.00px;top:135.27px;font-size:11.5px;color:#333;transform:scaleX(0.9167);">关闭</div><svg style="position:absolute;left:761px;top:133px;" width="12" height="14" viewBox="0 0 12 14"><rect x="0.5" y="0.8" width="11" height="3.3" rx="0.6" fill="#222"/><rect x="0.5" y="5.2" width="11" height="3.3" rx="0.6" fill="#222"/><rect x="0.5" y="9.6" width="11" height="3.3" rx="0.6" fill="#222"/><path d="M2 2.4 H4 M2 6.8 H4 M2 11.2 H4" stroke="#888" stroke-width="0.8"/></svg><svg style="position:absolute;left:841.5px;top:133px;" width="13" height="14" viewBox="0 0 13 14"><path d="M1 1 H7 L8.5 2.5 V6" fill="none" stroke="#333" stroke-width="1.3"/><path d="M1 1 V12 H5" fill="none" stroke="#333" stroke-width="1.3"/><rect x="3" y="2.5" width="2.5" height="3" fill="#333"/><circle cx="8.2" cy="9.2" r="3.6" fill="#f3f3f3" stroke="#333" stroke-width="1.3"/><path d="M8.2 7.3 V9.4 H9.8" fill="none" stroke="#333" stroke-width="1"/></svg><svg style="position:absolute;left:931.2px;top:133.3px;" width="13" height="13" viewBox="0 0 13 13"><path d="M10.81 5.63 L12.46 5.78 L12.46 7.22 L10.81 7.37 L10.57 8.18 L10.17 8.93 L11.22 10.20 L10.20 11.22 L8.93 10.17 L8.18 10.57 L7.37 10.81 L7.22 12.46 L5.78 12.46 L5.63 10.81 L4.82 10.57 L4.07 10.17 L2.80 11.22 L1.78 10.20 L2.83 8.93 L2.43 8.18 L2.19 7.37 L0.54 7.22 L0.54 5.78 L2.19 5.63 L2.43 4.82 L2.83 4.07 L1.78 2.80 L2.80 1.78 L4.07 2.83 L4.82 2.43 L5.63 2.19 L5.78 0.54 L7.22 0.54 L7.37 2.19 L8.18 2.43 L8.93 2.83 L10.20 1.78 L11.22 2.80 L10.17 4.07 L10.57 4.82 Z" fill="none" stroke="#333" stroke-width="1.2" stroke-linejoin="round"/><circle cx="6.5" cy="6.5" r="2" fill="none" stroke="#333" stroke-width="1.2"/></svg><svg style="position:absolute;left:999px;top:133.5px;" width="13" height="13" viewBox="0 0 13 13"><path d="M10.2 4 A4.6 4.6 0 1 0 10.8 8.5" fill="none" stroke="#222" stroke-width="1.6"/><path d="M8 4.3 L11.8 4.8 L11.2 1 Z" fill="#222"/></svg><svg style="position:absolute;left:1091.5px;top:133.5px;" width="12" height="13" viewBox="0 0 12 13"><path d="M9.5 3.2 A4.6 4.6 0 1 0 10.6 7" fill="none" stroke="#222" stroke-width="1.6"/><path d="M7.8 3.6 L11.5 4.2 L11 0.5 Z" fill="#222"/><path d="M5.7 4.3 V7 L7.6 8.3" fill="none" stroke="#222" stroke-width="1.2"/></svg><svg style="position:absolute;left:1182.5px;top:133.5px;" width="12" height="12" viewBox="0 0 12 12"><circle cx="6" cy="6" r="5" fill="none" stroke="#222" stroke-width="1.2"/><path d="M4.3 4.6 A1.8 1.8 0 1 1 6.6 6.3 Q6 6.7 6 7.6" fill="none" stroke="#222" stroke-width="1.1"/><circle cx="6" cy="9" r="0.7" fill="#222"/></svg><svg style="position:absolute;left:1250.5px;top:134px;" width="12" height="11" viewBox="0 0 12 11"><path d="M0.8 3.5 H3 L6.5 0.8 V10.2 L3 7.5 H0.8 Z" fill="#222"/><path d="M8.2 3.3 Q9.6 5.5 8.2 7.7 M9.6 2 Q11.8 5.5 9.6 9" fill="none" stroke="#222" stroke-width="1.1"/></svg><div style="position:absolute;left:1320.6px;top:139.4px;width:7.8px;height:1.3px;background:#333;"></div><svg style="position:absolute;left:1381px;top:133.0px;" width="4" height="4" viewBox="0 0 4 4"><circle cx="2" cy="2" r="1.7" fill="#222"/></svg><svg style="position:absolute;left:1381px;top:138.3px;" width="4" height="4" viewBox="0 0 4 4"><circle cx="2" cy="2" r="1.7" fill="#222"/></svg><svg style="position:absolute;left:1381px;top:143.6px;" width="4" height="4" viewBox="0 0 4 4"><circle cx="2" cy="2" r="1.7" fill="#222"/></svg><svg style="position:absolute;left:734.5px;top:153.5px;" width="14" height="17" viewBox="0 0 14 17"><circle cx="6.2" cy="5.5" r="5" fill="#ffcc00"/><rect x="3.8" y="9" width="4.8" height="3" fill="#ffcc00"/><path d="M4 11.5 H8.4 M4.2 13.3 H8.2" stroke="#b9b9b9" stroke-width="1.2"/><path d="M4.8 4.6 Q6.2 3.3 7.6 4.6 M6.2 5 V9" stroke="#fff3b0" stroke-width="0.9" fill="none"/></svg><svg style="position:absolute;left:740px;top:177px;" width="773" height="3" viewBox="0 0 773 3"><line x1="1" y1="1.3" x2="771" y2="1.3" stroke="#5a8ee6" stroke-width="1.4" stroke-dasharray="1.5 1.5"/></svg><div class="t" id="t35" style="left:811.00px;top:171.73px;font-size:10px;color:#8d8d8d;transform:scaleX(1.0333);">服务器过滤器，按回车执行</div><div style="position:absolute;left:811px;top:188px;width:172px;height:1.2px;background:#8a8a8a;"></div><div style="position:absolute;left:746px;top:162.5px;width:26px;height:26px;border-radius:50%;background:#6ec5fd;box-shadow:0 1.2px 2.5px rgba(0,0,0,0.28)"></div><svg style="position:absolute;left:746px;top:162.5px;" width="26" height="26" viewBox="0 0 26 26"><path d="M9.3 13 H16.7 M13 9.3 V16.7" stroke="#111" stroke-width="1.3"/></svg><div style="position:absolute;left:778.3px;top:162.5px;width:26px;height:26px;border-radius:50%;background:#6ec5fd;box-shadow:0 1.2px 2.5px rgba(0,0,0,0.28)"></div><svg style="position:absolute;left:778.3px;top:162.5px;" width="26" height="26" viewBox="0 0 26 26"><path d="M11.9 8.3 V17.7 M14.1 8.3 V17.7" stroke="#111" stroke-width="1.3"/><path d="M8 13 L11 11 V15 Z M18 13 L15 11 V15 Z" fill="#111"/></svg><div style="position:absolute;left:741.2px;top:191px;width:771.5px;height:32.5px;background:#fafafa;"></div><div style="position:absolute;left:741.2px;top:223.3px;width:771.5px;height:1px;background:#e2e2e2;"></div><div style="position:absolute;left:810.0px;top:192px;width:1px;height:31.5px;background:#e4e4e4;"></div><div style="position:absolute;left:937.9px;top:192px;width:1px;height:31.5px;background:#e4e4e4;"></div><div style="position:absolute;left:1040.7px;top:192px;width:1px;height:31.5px;background:#e4e4e4;"></div><div style="position:absolute;left:1091.9px;top:192px;width:1px;height:31.5px;background:#e4e4e4;"></div><div style="position:absolute;left:1178.0px;top:192px;width:1px;height:31.5px;background:#e4e4e4;"></div><div style="position:absolute;left:1263.3px;top:192px;width:1px;height:31.5px;background:#e4e4e4;"></div><div style="position:absolute;left:1349.5px;top:192px;width:1px;height:31.5px;background:#e4e4e4;"></div><div style="position:absolute;left:1435.7px;top:192px;width:1px;height:31.5px;background:#e4e4e4;"></div><div class="t" id="t36" style="left:755.00px;top:201.71px;font-size:10.5px;color:#4a4a4a;transform:scaleX(0.9318);">类型</div><div class="t" id="t37" style="left:823.50px;top:201.71px;font-size:10.5px;color:#4a4a4a;transform:scaleX(0.9091);">别名</div><div class="t" id="t38" style="left:952.60px;top:201.71px;font-size:10.5px;color:#4a4a4a;transform:scaleX(0.9182);">地址</div><div class="t" id="t39" style="left:1055.00px;top:201.71px;font-size:10.5px;color:#4a4a4a;transform:scaleX(0.9273);">端口</div><div class="t" id="t40" style="left:1106.70px;top:201.71px;font-size:10.5px;color:#4a4a4a;transform:scaleX(0.9386);">加密方式</div><div class="t" id="t41" style="left:1192.50px;top:201.71px;font-size:10.5px;color:#4a4a4a;transform:scaleX(0.9432);">传输协议</div><div class="t" id="t42" style="left:1278.00px;top:201.71px;font-size:10.5px;color:#4a4a4a;transform:scaleX(0.8513);">TLS</div><div class="t" id="t43" style="left:1364.60px;top:201.71px;font-size:10.5px;color:#4a4a4a;transform:scaleX(0.9182);">订阅分组</div><div class="t" id="t44" style="left:1449.00px;top:201.71px;font-size:10.5px;color:#4a4a4a;transform:scaleX(0.9953);">延迟(ms)</div><div style="position:absolute;left:741.2px;top:224.3px;width:771.5px;height:196px;background:#f9f9f9;"></div><svg style="position:absolute;left:1119.8px;top:299.1px;" width="11" height="11" viewBox="0 0 11 11"><circle cx="5.5" cy="5.5" r="3.8" fill="#fff" stroke="#4a86e8" stroke-width="1.5"/></svg><div style="position:absolute;left:739.5px;top:172.5px;width:1.6px;height:249px;background:#5a8ee6;"></div><div style="position:absolute;left:740px;top:189px;width:773.5px;height:2px;background:#5a8ee6;"></div><div style="position:absolute;left:1512.3px;top:173px;width:1.6px;height:248px;background:#5a8ee6;"></div><div style="position:absolute;left:1510.8px;top:173px;width:1.2px;height:12px;background:#5a8ee6;"></div><div style="position:absolute;left:741px;top:420px;width:772.5px;height:1.2px;background:#4a86e8;"></div><div style="position:absolute;left:741px;top:421.2px;width:772.5px;height:1.8px;background:#8db2ef;"></div><div style="position:absolute;left:741px;top:423px;width:772.5px;height:4px;background:#e6e6e6;"></div><div style="position:absolute;left:741px;top:427px;width:772.5px;height:2.3px;background:#8aaae8;"></div><div style="position:absolute;left:740px;top:429.3px;width:773.5px;height:232.2px;background:#6f6f6f;"></div><div style="position:absolute;left:740px;top:429.3px;width:773.5px;height:1.5px;background:#7a7660;"></div><div style="position:absolute;left:741.5px;top:430.8px;width:770.5px;height:228.5px;background:#ede6a8;"></div><div style="position:absolute;left:745.5px;top:434.5px;width:762.3px;height:221.7px;background:#ffffff;"></div><div class="t" id="t45" style="left:751.00px;top:441.31px;font-size:10.5px;color:#333;transform:scaleX(1.0494);">MsgView</div><div class="t" id="t46" style="left:967.50px;top:667.91px;font-size:10.5px;color:#333;transform:scaleX(0.9641);">启用Tun模式</div><div style="position:absolute;left:975px;top:684px;width:22.5px;height:9px;border-radius:4.5px;background:#bdbdbd"></div><div style="position:absolute;left:970px;top:681px;width:15px;height:15px;border-radius:50%;background:#fafafa;box-shadow:0 0.5px 2px rgba(0,0,0,0.45)"></div><div class="t" id="t47" style="left:1048.00px;top:683.61px;font-size:10.5px;color:#9a9a9a;transform:scaleX(0.9205);">系统代理</div><div style="position:absolute;left:1048px;top:696.8px;width:102.2px;height:1.3px;background:#707070;"></div><svg style="position:absolute;left:1143.5px;top:684.5px;" width="7" height="4" viewBox="0 0 7 4"><path d="M0 0 H6.8 L3.4 3.6 Z" fill="#777"/></svg><div class="t" id="t48" style="left:1164.50px;top:683.61px;font-size:10.5px;color:#9a9a9a;transform:scaleX(0.8955);">路由</div><div style="position:absolute;left:1164.5px;top:696.8px;width:127.5px;height:1.3px;background:#707070;"></div><svg style="position:absolute;left:1285.3px;top:684.5px;" width="7" height="4" viewBox="0 0 7 4"><path d="M0 0 H6.8 L3.4 3.6 Z" fill="#777"/></svg><svg style="position:absolute;left:715px;top:185px;" width="30" height="480" viewBox="0 0 30 480"><line x1="13.5" y1="6" x2="13.5" y2="472" stroke="#5a8ee6" stroke-width="1.5" stroke-dasharray="1.6 2.2"/></svg><div style="position:absolute;left:723px;top:186.6px;width:12px;height:1.6px;background:#5a8ee6;"></div><div style="position:absolute;left:723px;top:658.6px;width:16px;height:1.6px;background:#5a8ee6;"></div><div style="position:absolute;left:718.7px;top:292.5px;width:22.4px;height:24.5px;background:#ffffff;"></div><svg style="position:absolute;left:718.7px;top:292.5px;" width="22.4" height="24.5" viewBox="0 0 22.4 24.5"><g transform="translate(0,15.10)" stroke="#4a86e8" fill="none"><path d="M4.3 0 H17.5" stroke-width="1.7"/><path d="M4.3 0 L7 3" stroke-width="1.4"/><path d="M4.6 -9.6 H10.6 M5.6 -12.7 L9.6 -6.5 M9.6 -12.7 L5.6 -6.5" stroke-width="1.2"/></g></svg><div style="position:absolute;left:718.7px;top:531.9px;width:22.4px;height:23.399999999999977px;background:#ffffff;"></div><svg style="position:absolute;left:718.7px;top:531.9px;" width="22.4" height="23.399999999999977" viewBox="0 0 22.4 23.399999999999977"><g transform="translate(0,16.30)" stroke="#4a86e8" fill="none"><path d="M4.3 0 H17.5" stroke-width="1.7"/><path d="M4.3 0 L7 3" stroke-width="1.4"/><path d="M4.6 -9.6 H10.6 M5.6 -12.7 L9.6 -6.5 M9.6 -12.7 L5.6 -6.5" stroke-width="1.2"/></g></svg><div style="position:absolute;left:734.5px;top:184px;width:6.2px;height:6.5px;background:#ffffff;box-sizing:border-box;border:1.3px solid #5a8ee6"></div><div style="position:absolute;left:1513px;top:184.6px;width:7px;height:6px;background:#ffffff;box-sizing:border-box;border:1.3px solid #5a8ee6"></div><div style="position:absolute;left:734px;top:421.8px;width:6.2px;height:6.4px;background:#ffffff;box-sizing:border-box;border:1.3px solid #5a8ee6"></div><div style="position:absolute;left:1513px;top:422.2px;width:6.5px;height:6.3px;background:#ffffff;box-sizing:border-box;border:1.3px solid #5a8ee6"></div><div style="position:absolute;left:734px;top:301.9px;width:7px;height:7px;background:#ffffff;box-sizing:border-box;border:1.3px solid #5a8ee6"></div><svg style="position:absolute;left:719.5px;top:413.5px;" width="12" height="22" viewBox="0 0 12 22"><path d="M1.5 1.5 L9.5 6.5 L1.5 11 Z M1.5 10 L9.5 14.5 L1.5 19.5 Z" fill="#fff" stroke="#5a8ee6" stroke-width="1.4"/></svg><svg style="position:absolute;left:1121px;top:178.5px;" width="11" height="22" viewBox="0 0 11 22"><rect x="2" y="1" width="7" height="9" rx="3.5" fill="none" stroke="#444" stroke-width="1.5"/><rect x="2" y="11" width="7" height="9" rx="3.5" fill="none" stroke="#444" stroke-width="1.5"/></svg><div style="position:absolute;left:1122.2px;top:183.5px;width:7.8px;height:7.3px;background:#ffffff;box-sizing:border-box;border:1.3px solid #5a8ee6"></div><svg style="position:absolute;left:1121px;top:408.5px;" width="11" height="12" viewBox="0 0 11 12"><path d="M2.2 11 V5 A3.3 3.3 0 0 1 8.8 5 V8" fill="none" stroke="#444" stroke-width="1.5"/></svg><div style="position:absolute;left:1122px;top:421px;width:8px;height:8px;background:#ffffff;box-sizing:border-box;border:1.3px solid #5a8ee6"></div><svg style="position:absolute;left:740.5px;top:298px;" width="12" height="16" viewBox="0 0 12 16"><path d="M0.6 1.2 A4.2 4.2 0 0 1 3.2 8.8" fill="none" stroke="#444" stroke-width="1.5"/><path d="M5.8 5.9 A4.3 4.3 0 0 1 1 14.3" fill="none" stroke="#444" stroke-width="1.7"/></svg><svg style="position:absolute;left:1500px;top:297px;" width="22" height="17" viewBox="0 0 22 17"><rect x="1" y="2" width="11" height="7" rx="3.5" fill="none" stroke="#444" stroke-width="1.5"/><rect x="5.5" y="6.5" width="13" height="7.5" rx="3.7" fill="none" stroke="#444" stroke-width="1.5"/></svg><div style="position:absolute;left:1513px;top:300.5px;width:6px;height:6px;background:#ffffff;box-sizing:border-box;border:1.3px solid #5a8ee6"></div><svg style="position:absolute;left:1502.5px;top:420.5px;" width="17" height="17" viewBox="0 0 17 17"><circle cx="8.3" cy="8" r="7.6" fill="#e00000"/><path d="M5 4.8 L11.6 11.2 M11.6 4.8 L5 11.2" stroke="#fff" stroke-width="2"/></svg><div style="position:absolute;left:1513px;top:422.2px;width:6.5px;height:6.3px;background:#ffffff;box-sizing:border-box;border:1.3px solid #5a8ee6"></div><div style="position:absolute;left:517px;top:778.7px;width:1083px;height:21px;background:#f5f5f5;"></div><div style="position:absolute;left:517px;top:778.8px;width:91.6px;height:22px;background:#ffffff;box-sizing:border-box;border:1px solid #cccedb;border-top:2px solid #d0d0dc;border-left:none"></div><div class="t" id="t49" style="left:526.60px;top:785.16px;font-size:18px;color:#1e1e1e;transform:scaleX(0.9056);">57.71%</div><svg style="position:absolute;left:595.5px;top:790px;" width="8" height="5" viewBox="0 0 8 5"><path d="M0 0 H7.7 L3.85 4.5 Z" fill="#1e1e1e"/></svg><svg style="position:absolute;left:620px;top:784px;" width="16" height="16" viewBox="0 0 16 16"><path d="M11.5 5 A5.2 5.2 0 1 0 12.8 10" fill="none" stroke="#333" stroke-width="2.2"/><path d="M8.5 5.5 L13.5 6 L13 1 Z" fill="#333"/></svg><div style="position:absolute;left:643px;top:780.4px;width:32px;height:22px;background:#f5f5f5;box-sizing:border-box;border:1.3px solid #4a7fd0"></div><div class="t" id="t50" style="left:649.50px;top:782.57px;font-size:20px;color:#333;transform:scaleX(1.3853);font-family:'Liberation Serif',serif;"><i>fx</i></div><svg style="position:absolute;left:683px;top:786px;" width="22" height="14" viewBox="0 0 22 14"><rect x="0.0" y="0.0" width="5.6" height="5.6" fill="#3a3a3a"/><rect x="7.2" y="0.0" width="5.6" height="5.6" fill="#3a3a3a"/><rect x="14.4" y="0.0" width="5.6" height="5.6" fill="#3a3a3a"/><rect x="0.0" y="7.2" width="5.6" height="5.6" fill="#3a3a3a"/><rect x="7.2" y="7.2" width="5.6" height="5.6" fill="#3a3a3a"/><rect x="14.4" y="7.2" width="5.6" height="5.6" fill="#3a3a3a"/></svg><svg style="position:absolute;left:717px;top:786px;" width="22" height="14" viewBox="0 0 22 14"><rect x="0" y="0" width="5" height="14" fill="#3a3a3a"/><rect x="16" y="0" width="5" height="14" fill="#3a3a3a"/><circle cx="10.5" cy="6" r="4" fill="none" stroke="#3a3a3a" stroke-width="2.2"/><rect x="6" y="0" width="9" height="2" fill="#3a3a3a"/></svg><svg style="position:absolute;left:752.5px;top:784.5px;" width="19" height="16" viewBox="0 0 19 16"><rect x="0" y="0" width="18.5" height="16" fill="#3a3a3a"/><path d="M2 2 L6 6 M6 2 L2 6 M12 10 L16 14 M16 10 L12 14" stroke="#aaa" stroke-width="1"/></svg><div style="position:absolute;left:780px;top:780.5px;width:31.7px;height:22px;background:#f5f5f5;box-sizing:border-box;border:1.3px solid #4a7fd0"></div><svg style="position:absolute;left:785px;top:784px;" width="22" height="16" viewBox="0 0 22 16"><path d="M1 11.5 H9 M14 11.5 H21 M11.5 1 V8" stroke="#222" stroke-width="2.2"/><circle cx="11.5" cy="11.5" r="2.8" fill="#fff" stroke="#222" stroke-width="2"/></svg><div style="position:absolute;left:814.4px;top:780.5px;width:31.5px;height:22px;background:#f5f5f5;box-sizing:border-box;border:1.3px solid #4a7fd0"></div><svg style="position:absolute;left:820px;top:783px;" width="20" height="17" viewBox="0 0 20 17"><path d="M4 1 H11 L15 5 V15 H4 Z" fill="none" stroke="#333" stroke-width="1.4"/><path d="M8 7 H12 M8 7 L10 5 M12 10 H8" fill="none" stroke="#333" stroke-width="1.2"/><rect x="6" y="13.5" width="6" height="4" fill="#1e88e5"/></svg><svg style="position:absolute;left:855px;top:786px;" width="9" height="14" viewBox="0 0 9 14"><path d="M8.6 0 V13 L0.5 6.5 Z" fill="#8a8a9a"/></svg></body></html>
